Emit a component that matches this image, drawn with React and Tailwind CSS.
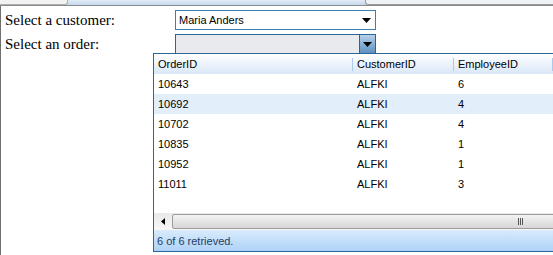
import React from "react";

const orders = [
	{ id: "10643", customer: "ALFKI", employee: "6" },
	{ id: "10692", customer: "ALFKI", employee: "4" },
	{ id: "10702", customer: "ALFKI", employee: "4" },
	{ id: "10835", customer: "ALFKI", employee: "1" },
	{ id: "10952", customer: "ALFKI", employee: "1" },
	{ id: "11011", customer: "ALFKI", employee: "3" },
];

function Arrow() {
	return (
		<svg width="9" height="5" viewBox="0 0 9 5">
			<path d="M0 0H9L4.5 5Z" fill="#000" />
		</svg>
	);
}

function OrderGrid() {
	return (
		<div className="absolute left-[153px] top-[53px] w-[420px] h-[199px] flex flex-col bg-white border-l border-t border-b border-[#2c6699] font-['Liberation_Sans',Arial,sans-serif] text-[11px] text-black">
			<div className="h-[20px] flex items-center pt-px bg-gradient-to-b from-[#ffffff] to-[#d9e7f7]">
				<div className="w-[198px] pl-[4px]">OrderID</div>
				<div className="w-px h-[13px] bg-[#a9c9ee]" />
				<div className="w-[100px] pl-[4px]">CustomerID</div>
				<div className="w-px h-[13px] bg-[#a9c9ee]" />
				<div className="w-[98px] pl-[4px]">EmployeeID</div>
				<div className="w-px h-[13px] bg-[#a9c9ee]" />
			</div>
			{orders.map((o, i) => (
				<div
					key={o.id}
					className={`h-[20px] flex items-center pt-px ${i === 1 ? "bg-[#e3eefb]" : "bg-white"}`}
				>
					<div className="w-[199px] pl-[4px]">{o.id}</div>
					<div className="w-[101px] pl-[4px]">{o.customer}</div>
					<div className="w-[99px] pl-[4px]">{o.employee}</div>
				</div>
			))}
			<div className="flex-1" />
			<div className="h-[17px] flex items-stretch bg-gradient-to-b from-[#e9e9e9] to-[#f7f7f7]">
				<div className="w-[18px] flex items-center justify-center">
					<svg width="4" height="7" viewBox="0 0 4 7">
						<path d="M4 0V7L0 3.5Z" fill="#000" />
					</svg>
				</div>
				<div className="flex-1 my-px border border-[#9b9b9b] rounded-[2px] bg-gradient-to-b from-[#f3f3f3] to-[#d6d6d6] flex items-center">
					<div className="ml-[345px] flex gap-px">
						<div className="w-px h-[7px] bg-[#555]" />
						<div className="w-px h-[7px] bg-[#555]" />
						<div className="w-px h-[7px] bg-[#555]" />
					</div>
				</div>
			</div>
			<div className="min-h-[21px] flex items-center pl-[3px] pt-px bg-gradient-to-b from-[#d9ebfc] to-[#aed2f6] text-[#1f3d66]">
				6 of 6 retrieved.
			</div>
		</div>
	);
}

export default function App() {
	return (
		<div className="relative w-[553px] h-[255px] bg-white overflow-hidden font-['Liberation_Serif','Times_New_Roman',serif]">
			<div className="h-[6px] flex border-b border-[#8a8a8a] bg-gradient-to-b from-[#e4ecf6] to-[#c4d8ee]">
				<div className="w-[68px] border-r border-b border-[#b0b0b0] rounded-br-[3px] bg-[#f2f2f2]" />
				<div className="flex-1" />
				<div className="w-[188px] border-l border-b border-[#9a9a9a] rounded-bl-[3px] bg-[#eef1f5]" />
			</div>
			<div className="h-[249px] border-l border-[#6f6f6f] pt-[4px]">
				<div className="flex items-center h-[20px]">
					<div className="w-[174px] pl-[4px] text-[15px] leading-none text-black">
						Select a customer:
					</div>
					<div className="w-[201px] h-[20px] border border-[#3f7eb0] bg-white flex items-center justify-between pl-[3px] pr-[4px] font-['Liberation_Sans',Arial,sans-serif] text-[11px] text-black">
						<span>Maria Anders</span>
						<Arrow />
					</div>
				</div>
				<div className="flex items-center h-[20px] mt-[4px]">
					<div className="w-[174px] pl-[4px] text-[15px] leading-none text-black">
						Select an order:
					</div>
					<div className="w-[201px] h-[20px] border border-[#2b6597] bg-[#e8eaee] flex justify-end">
						<div className="w-[16px] h-full border-l border-[#2b6597] bg-gradient-to-b from-[#b6d1ea] to-[#5e90c0] flex items-center justify-center">
							<Arrow />
						</div>
					</div>
				</div>
			</div>
			<OrderGrid />
		</div>
	);
}
